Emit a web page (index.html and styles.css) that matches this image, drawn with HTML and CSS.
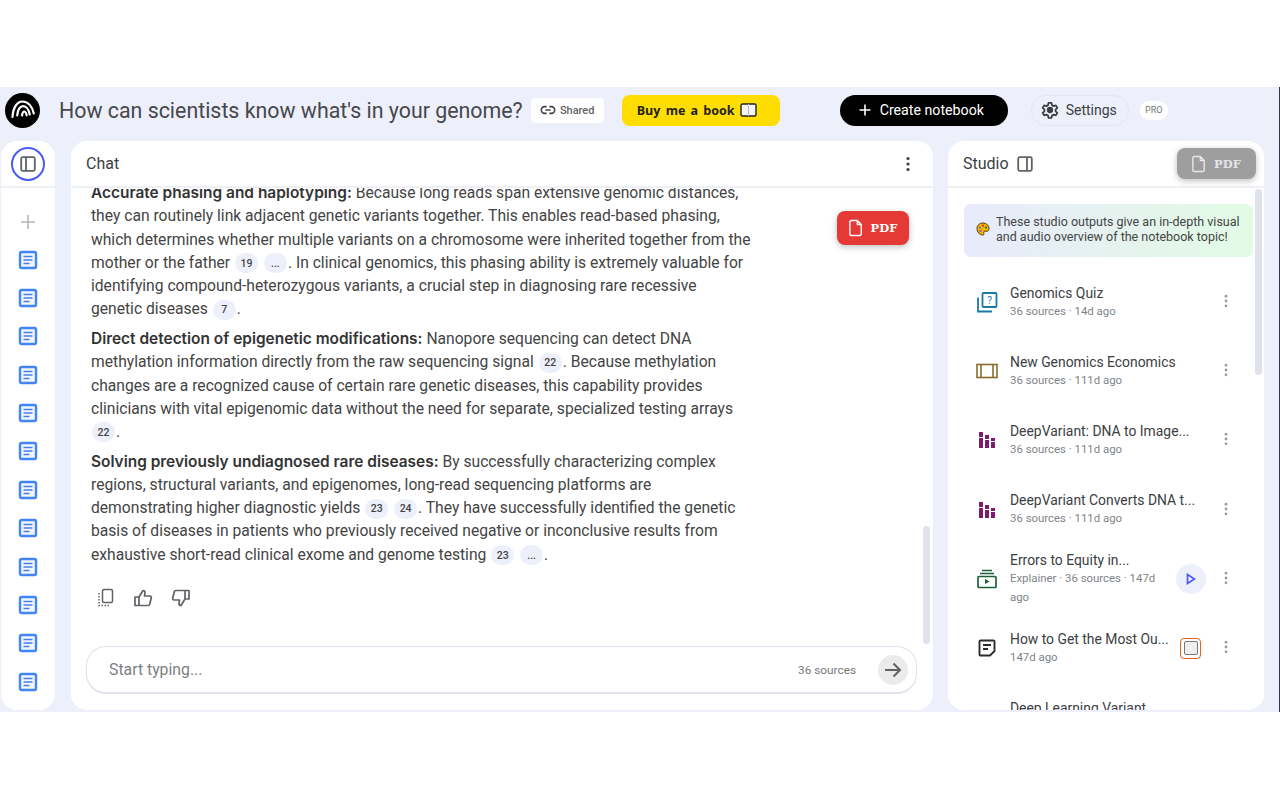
FILE: index.html
```html
<!DOCTYPE html>
<html>
<head>
<meta charset="utf-8">
<title>How can scientists know what's in your genome?</title>
	<link rel="stylesheet" href="styles.css">
</head>
<body>
	<svg class="sprites" width="0" height="0">
		<symbol id="doc" viewBox="0 0 20 20">
			<rect x="2" y="2" width="16" height="16" rx="1.5" fill="#f1f5fe" stroke="#4285f4" stroke-width="2.4"/>
			<path d="M5.5 6.5h9M5.5 10h9M5.5 13.5h6" stroke="#4a7fe8" stroke-width="1.7" fill="none"/>
		</symbol>
		<symbol id="dots" viewBox="0 0 4 16">
			<circle cx="2" cy="2.5" r="1.6"/><circle cx="2" cy="8" r="1.6"/><circle cx="2" cy="13.5" r="1.6"/>
		</symbol>
		<symbol id="bars" viewBox="0 0 18 18">
			<path d="M1 1h4v5H1zM1 7h4v10H1zM7 4h4v4H7zM7 9h4v8H7zM13 7h4v3h-4zM13 11h4v6h-4z" fill="#7b1c6d"/>
		</symbol>
		<symbol id="file" viewBox="0 0 16 20">
			<path d="M2.500 1.500h7l4.500 4.500v11a1.500 1.500 0 0 1-1.500 1.500h-10A1.500 1.500 0 0 1 1 17V3a1.500 1.500 0 0 1 1.500-1.500zM9.500 1.500V6H14" fill="none" stroke="currentColor" stroke-width="1.600" stroke-linejoin="round"/>
		</symbol>
	</svg>

	<div class="app">
		<header class="topbar">
			<div class="logo">
				<svg width="26" height="26" viewBox="0 0 26 26" fill="none" stroke="#fff" stroke-width="2.200" stroke-linecap="round">
					<path d="M2.500 20C3 10 7.500 4.500 12.500 4.500 18 4.500 22.500 9.500 23.800 16.500"/>
					<path d="M7.200 18.500C8 12 10.500 9.200 13.200 9.200 16 9.200 18.800 12.500 19.800 17.500"/>
					<path d="M12 18.500c.4-2.500 1-4 2.200-4 1.200 0 2 1.500 2.500 3.800"/>
				</svg>
			</div>
			<h1 class="title">How can scientists know what's in your genome?</h1>
			<div class="shared">
				<svg width="16" height="16" viewBox="0 0 24 24" fill="none" stroke="#444" stroke-width="2.400"><path d="M10 7H7a5 5 0 0 0 0 10h3M14 7h3a5 5 0 0 1 0 10h-3M8 12h8"/></svg>
				Shared
			</div>
			<div class="book">
				Buy me a book
				<svg width="17" height="14" viewBox="0 0 17 14"><rect x="1" y="1" width="15" height="12" rx="1.500" fill="#f4f4f4" stroke="#222" stroke-width="1.400"/><path d="M8.500 1v12" stroke="#bbb"/></svg>
			</div>
			<div class="create">
				<svg width="14" height="14" viewBox="0 0 14 14" stroke="#fff" stroke-width="1.600"><path d="M7 1.500v11M1.500 7h11"/></svg>
				Create notebook
			</div>
			<div class="settings">
				<svg width="18" height="18" viewBox="0 0 24 24" fill="none" stroke="#3c4043" stroke-width="2.400" stroke-linejoin="round"><path d="M10 2.500h4l.6 3 2.300 1.300 2.900-1 2 3.400-2.300 2v2.600l2.300 2-2 3.400-2.900-1-2.300 1.300-.6 3h-4l-.6-3-2.300-1.300-2.900 1-2-3.400 2.300-2v-2.600l-2.300-2 2-3.400 2.900 1 2.300-1.300z"/><circle cx="12" cy="12" r="3" fill="#3c4043"/></svg>
				Settings
			</div>
			<div class="pro">PRO</div>
		</header>

		<div class="panels">
			<aside class="rail">
				<div class="rail-head">
					<div class="rail-toggle">
						<svg width="16" height="16" viewBox="0 0 16 16" fill="none" stroke="#5f6368" stroke-width="1.800"><rect x="1.200" y="1.200" width="13.600" height="13.600" rx="1.500"/><path d="M6 1.500v13"/></svg>
					</div>
				</div>
				<div class="rail-list">
					<svg class="rail-plus" width="14" height="14" viewBox="0 0 14 14" stroke="#b4b6ba" stroke-width="1.600"><path d="M7 0v14M0 7h14"/></svg>
					<svg class="rail-doc"><use href="#doc"/></svg>
					<svg class="rail-doc"><use href="#doc"/></svg>
					<svg class="rail-doc"><use href="#doc"/></svg>
					<svg class="rail-doc"><use href="#doc"/></svg>
					<svg class="rail-doc"><use href="#doc"/></svg>
					<svg class="rail-doc"><use href="#doc"/></svg>
					<svg class="rail-doc"><use href="#doc"/></svg>
					<svg class="rail-doc"><use href="#doc"/></svg>
					<svg class="rail-doc"><use href="#doc"/></svg>
					<svg class="rail-doc"><use href="#doc"/></svg>
					<svg class="rail-doc"><use href="#doc"/></svg>
					<svg class="rail-doc"><use href="#doc"/></svg>
				</div>
			</aside>

			<main class="chat">
				<div class="panel-head">
					<span class="panel-title">Chat</span>
					<svg class="chat-menu"><use href="#dots"/></svg>
				</div>
				<div class="messages">
					<p><b>Accurate phasing and haplotyping:</b> Because long reads span extensive genomic distances,<br>
					they can routinely link adjacent genetic variants together. This enables read-based phasing,<br>
					which determines whether multiple variants on a chromosome were inherited together from the<br>
					mother or the father <span class="cite">19</span> <span class="cite">...</span>. In clinical genomics, this phasing ability is extremely valuable for<br>
					identifying compound-heterozygous variants, a crucial step in diagnosing rare recessive<br>
					genetic diseases <span class="cite">7</span>.</p>
					<p><b>Direct detection of epigenetic modifications:</b> Nanopore sequencing can detect DNA<br>
					methylation information directly from the raw sequencing signal <span class="cite">22</span>. Because methylation<br>
					changes are a recognized cause of certain rare genetic diseases, this capability provides<br>
					clinicians with vital epigenomic data without the need for separate, specialized testing arrays<br>
					<span class="cite">22</span>.</p>
					<p><b>Solving previously undiagnosed rare diseases:</b> By successfully characterizing complex<br>
					regions, structural variants, and epigenomes, long-read sequencing platforms are<br>
					demonstrating higher diagnostic yields <span class="cite">23</span> <span class="cite">24</span>. They have successfully identified the genetic<br>
					basis of diseases in patients who previously received negative or inconclusive results from<br>
					exhaustive short-read clinical exome and genome testing <span class="cite">23</span> <span class="cite">...</span>.</p>
					<div class="feedback">
						<svg width="18" height="20" viewBox="0 0 18 20" fill="none" stroke="#5f6368" stroke-width="1.500"><rect x="5.500" y="1.500" width="10" height="13" rx="1.500"/><path d="M2 5v12.500h10" stroke-dasharray="1.500 1.500"/></svg>
						<svg width="20" height="20" viewBox="0 0 20 20" fill="none" stroke="#5f6368" stroke-width="1.700" stroke-linejoin="round"><path d="M6 9 10 2.500c1.500 0 2 1 2 2L11.500 8H17c1 0 1.500 1 1.300 1.800l-1.600 6.500c-.2.700-.8 1.200-1.500 1.200H6zM6 9H2v8.500h4"/></svg>
						<svg width="20" height="20" viewBox="0 0 20 20" fill="none" stroke="#5f6368" stroke-width="1.700" stroke-linejoin="round"><path d="M14 11l-4 6.500c-1.500 0-2-1-2-2l.5-3.500H3c-1 0-1.500-1-1.300-1.800l1.600-6.500c.2-.7.8-1.200 1.500-1.200H14zM14 11h4V2.500h-4"/></svg>
					</div>
				</div>
				<div class="chat-scroll"></div>
				<div class="pdf pdf-red">
					<svg width="14" height="18"><use href="#file"/></svg>
					PDF
				</div>
				<div class="input-row">
					<span class="placeholder">Start typing...</span>
					<span class="source-count">36 sources</span>
					<div class="send">
						<svg width="18" height="18" viewBox="0 0 18 18" fill="none" stroke="#5f6368" stroke-width="2"><path d="M1 9h15M9.500 2.500 16 9l-6.500 6.500"/></svg>
					</div>
				</div>
			</main>

			<aside class="studio">
				<div class="panel-head">
					<span class="panel-title">Studio</span>
					<svg class="studio-toggle" width="16" height="16" viewBox="0 0 16 16" fill="none" stroke="#5f6368" stroke-width="1.800"><rect x="1.200" y="1.200" width="13.600" height="13.600" rx="1.500"/><path d="M10 1.500v13"/></svg>
				</div>
				<div class="pdf pdf-grey">
					<svg width="14" height="18"><use href="#file"/></svg>
					PDF
				</div>
				<div class="studio-scroll"></div>
				<div class="studio-list">
					<div class="notice">
						<svg class="palette" width="14" height="14" viewBox="0 0 14 14">
							<path d="M7 1C3.500 1 1 3.300 1 6.500S3.500 13 6.500 13c1.500 0 1.700-1 1.300-2-.4-1 .2-1.800 1.300-1.800h1.900C12.300 9.200 13 8 13 6.500 13 3.500 10.500 1 7 1z" fill="#f5b400" stroke="#4a3a10" stroke-width="1"/>
							<circle cx="4" cy="5.500" r="1.100" fill="#3b78e7"/><circle cx="7" cy="3.700" r="1.100" fill="#d93025"/><circle cx="10" cy="5.500" r="1.100" fill="#188038"/><circle cx="4.500" cy="9" r="1.100" fill="#a142f4"/>
						</svg>
						<span>These studio outputs give an in-depth visual and audio overview of the notebook topic!</span>
					</div>

					<div class="item">
						<div class="item-icon">
							<svg width="22" height="22" viewBox="0 0 22 22" fill="none" stroke="#1a7bab" stroke-width="1.800"><rect x="6.500" y="2" width="14" height="14" rx="1"/><path d="M2 6.500V20.500h14"/><text x="13.500" y="13" font-size="10" font-family="Roboto, sans-serif" text-anchor="middle" fill="#1a7bab" stroke="none">?</text></svg>
						</div>
						<div class="item-text">
							<div class="item-name">Genomics Quiz</div>
							<div class="item-sub">36 sources · 14d ago</div>
						</div>
						<svg class="item-menu"><use href="#dots"/></svg>
					</div>

					<div class="item">
						<div class="item-icon">
							<svg width="22" height="16" viewBox="0 0 22 16" fill="none" stroke="#8a6d2b" stroke-width="1.600"><rect x="1" y="1.500" width="20" height="13"/><path d="M5 1.500v13M17 1.500v13"/></svg>
						</div>
						<div class="item-text">
							<div class="item-name">New Genomics Economics</div>
							<div class="item-sub">36 sources · 111d ago</div>
						</div>
						<svg class="item-menu"><use href="#dots"/></svg>
					</div>

					<div class="item">
						<div class="item-icon">
							<svg width="18" height="18"><use href="#bars"/></svg>
						</div>
						<div class="item-text">
							<div class="item-name">DeepVariant: DNA to Image...</div>
							<div class="item-sub">36 sources · 111d ago</div>
						</div>
						<svg class="item-menu"><use href="#dots"/></svg>
					</div>

					<div class="item">
						<div class="item-icon">
							<svg width="18" height="18"><use href="#bars"/></svg>
						</div>
						<div class="item-text">
							<div class="item-name">DeepVariant Converts DNA t...</div>
							<div class="item-sub">36 sources · 111d ago</div>
						</div>
						<svg class="item-menu"><use href="#dots"/></svg>
					</div>

					<div class="item">
						<div class="item-icon">
							<svg width="20" height="20" viewBox="0 0 20 20" fill="none" stroke="#1e5f3a" stroke-width="1.700"><path d="M5 1.500h10M3 4.500h14"/><rect x="1" y="7.500" width="18" height="11" rx="1" stroke="#1e5f3a"/><path d="M8 10v5l4.500-2.500z" fill="#1e5f3a" stroke="none"/></svg>
						</div>
						<div class="item-text">
							<div class="item-name">Errors to Equity in...</div>
							<div class="item-sub">Explainer · 36 sources · 147d ago</div>
						</div>
						<div class="item-play">
							<svg width="10" height="12" viewBox="0 0 10 12" fill="none" stroke="#4a5cf0" stroke-width="1.700"><path d="M1.500 1.500v9L8.500 6z"/></svg>
						</div>
						<svg class="item-menu"><use href="#dots"/></svg>
					</div>

					<div class="item">
						<div class="item-icon">
							<svg width="18" height="18" viewBox="0 0 18 18" fill="none" stroke="#2c2c2c" stroke-width="1.900"><path d="M2.500 1.500h13a1 1 0 0 1 1 1V12l-4.500 4.500H2.500a1 1 0 0 1-1-1v-13a1 1 0 0 1 1-1zM5 6h8M5 10h5"/></svg>
						</div>
						<div class="item-text">
							<div class="item-name">How to Get the Most Ou...</div>
							<div class="item-sub">147d ago</div>
						</div>
						<div class="item-stop"><span></span></div>
						<svg class="item-menu"><use href="#dots"/></svg>
					</div>

					<div class="item">
						<div class="item-icon">
							<svg width="18" height="18" viewBox="0 0 18 18"><path d="M1 2h16v3H1z" fill="#a54a94"/></svg>
						</div>
						<div class="item-text">
							<div class="item-name">Deep Learning Variant</div>
							<div class="item-sub">36 sources · 147d ago</div>
						</div>
						<svg class="item-menu"><use href="#dots"/></svg>
					</div>
				</div>
			</aside>
		</div>
	</div>
</body>
</html>
```

FILE: styles.css
```css
body {
	font-family: Inter, "Liberation Sans", sans-serif;
	margin: 0;
	padding: 0;
	background: white;
	color: #3c4043;
}
.sprites {
	position: absolute;
}
.app {
	margin-top: 87px;
	height: 625px;
	background: #edeffa;
	overflow: hidden;
	border-right: 1px solid #2a3550;
}
.topbar {
	height: 46px;
	padding: 0 0 8px 5px;
	display: flex;
	align-items: center;
}
.logo {
	width: 35px;
	height: 35px;
	border-radius: 50%;
	background: black;
	display: flex;
	align-items: center;
	justify-content: center;
	margin-right: 19px;
}
.title {
	font-family: Roboto, sans-serif;
	font-size: 21.360px;
	font-weight: 400;
	margin: 0 8px 0 0;
	color: #45484c;
	white-space: nowrap;
}
.shared {
	width: 73px;
	height: 25px;
	background: white;
	border-radius: 4px;
	display: flex;
	align-items: center;
	justify-content: center;
	gap: 4px;
	font-family: Roboto, sans-serif;
	font-size: 11px;
	font-weight: 500;
	color: #5f6368;
}
.book {
	margin-left: 18px;
	width: 158px;
	height: 31px;
	box-sizing: border-box;
	padding-left: 15px;
	background: #ffdd00;
	border-radius: 8px;
	display: flex;
	align-items: center;
	gap: 5px;
	font-family: "Open Sans", sans-serif;
	font-size: 12.500px;
	font-weight: 700;
	word-spacing: 2px;
	color: #222;
	white-space: nowrap;
}
.create {
	margin-left: 60px;
	width: 168px;
	height: 31px;
	box-sizing: border-box;
	padding-left: 18px;
	background: black;
	color: white;
	border-radius: 16px;
	display: flex;
	align-items: center;
	gap: 8px;
	font-family: Roboto, sans-serif;
	font-size: 14.200px;
	font-weight: 400;
}
.settings {
	margin-left: 23px;
	width: 98px;
	height: 31px;
	box-sizing: border-box;
	padding-left: 9px;
	border: 1px solid #e3e5f0;
	border-radius: 16px;
	display: flex;
	align-items: center;
	gap: 7px;
	font-family: Roboto, sans-serif;
	font-size: 14px;
	color: #3c4043;
}
.pro {
	margin-left: 11px;
	width: 28px;
	height: 19px;
	background: white;
	border-radius: 9px;
	display: flex;
	align-items: center;
	justify-content: center;
	font-size: 9px;
	font-family: Roboto, sans-serif;
	color: #777;
}
.panels {
	display: flex;
	height: 569px;
	padding-left: 1px;
}
.rail {
	width: 54px;
	background: white;
	border-radius: 16px;
	overflow: hidden;
	margin-right: 16px;
}
.rail-head {
	height: 45px;
	border-bottom: 2px solid #eef0f6;
	display: flex;
	align-items: center;
	justify-content: center;
}
.rail-toggle {
	width: 30px;
	height: 30px;
	border: 2px solid #4a5cf0;
	border-radius: 50%;
	display: flex;
	align-items: center;
	justify-content: center;
}
.rail-list {
	display: flex;
	flex-direction: column;
	align-items: center;
	padding-top: 27px;
}
.rail-plus {
	margin-bottom: 20.500px;
}
.rail-doc {
	width: 20px;
	height: 20px;
	flex: none;
	margin-bottom: 18.400px;
}
.chat {
	width: 862px;
	background: white;
	border-radius: 16px;
	overflow: hidden;
	position: relative;
	margin-right: 15px;
	display: flex;
	flex-direction: column;
}
.panel-head {
	height: 45px;
	flex: none;
	border-bottom: 2px solid #eef0f6;
	display: flex;
	align-items: center;
	padding: 0 15px;
	position: relative;
}
.panel-title {
	font-family: Roboto, sans-serif;
	font-size: 16px;
	color: #3c4043;
}
.chat-menu {
	width: 4px;
	height: 16px;
	margin-left: auto;
	margin-right: 8px;
	fill: #3c4043;
}
.messages {
	height: 458px;
	overflow: hidden;
	padding: 0 20px;
	font-family: Roboto, sans-serif;
	font-size: 15.650px;
	line-height: 23.120px;
	color: #444;
}
.messages p {
	margin: 0 0 7.200px;
	white-space: nowrap;
}
.messages p:first-child {
	margin-top: -6.700px;
}
.messages b {
	font-family: Inter, sans-serif;
	font-size: 15.450px;
	font-weight: 600;
	color: #333;
}
.cite {
	display: inline-flex;
	align-items: center;
	justify-content: center;
	min-width: 23px;
	height: 20px;
	box-sizing: border-box;
	padding: 0 5px;
	background: #edeffa;
	border-radius: 10px;
	font-size: 10.500px;
	font-weight: 500;
	vertical-align: 1px;
	margin: 0 1px;
}
.feedback {
	display: flex;
	gap: 18px;
	align-items: center;
	padding: 15.500px 6px 0;
}
.chat-scroll {
	position: absolute;
	right: 3px;
	top: 385px;
	width: 7px;
	height: 118px;
	background: #dfe2ec;
	border-radius: 4px;
}
.pdf {
	position: absolute;
	display: flex;
	align-items: center;
	justify-content: center;
	gap: 8px;
	color: white;
	font-family: "DejaVu Serif", "Liberation Serif", serif;
	font-weight: 700;
	font-size: 11.500px;
	border-radius: 8px;
	box-shadow: 0 2px 6px rgba(0, 0, 0, 0.25);
}
.pdf-red {
	left: 766px;
	top: 70px;
	width: 72px;
	height: 34px;
	background: #e53935;
}
.pdf-grey {
	left: 229px;
	top: 7px;
	width: 79px;
	height: 31px;
	background: #9e9e9e;
	color: #e6e6e6;
}
.input-row {
	margin: 0 16px 0 15px;
	height: 48px;
	flex: none;
	box-sizing: border-box;
	border: 1px solid #dfe2ec;
	border-bottom-width: 2px;
	border-radius: 20px;
	display: flex;
	align-items: center;
	padding: 0 8px 0 22px;
}
.placeholder {
	font-family: Roboto, sans-serif;
	font-size: 15.800px;
	color: #7d8085;
}
.source-count {
	margin-left: auto;
	font-family: Roboto, sans-serif;
	font-size: 11.800px;
	color: #777;
	margin-right: 22px;
}
.send {
	width: 30px;
	height: 30px;
	border-radius: 50%;
	background: #ebebeb;
	display: flex;
	align-items: center;
	justify-content: center;
}
.studio {
	width: 316px;
	background: white;
	border-radius: 16px;
	overflow: hidden;
	position: relative;
	display: flex;
	flex-direction: column;
}
.studio-toggle {
	margin-left: 8px;
}
.studio-scroll {
	position: absolute;
	left: 307px;
	top: 48px;
	width: 7px;
	height: 186px;
	background: #dfe2ec;
	border-radius: 4px;
}
.studio-list {
	padding: 16px 11px 0 16px;
	font-family: Roboto, sans-serif;
}
.notice {
	height: 53px;
	box-sizing: border-box;
	border-radius: 7px;
	background: linear-gradient(90deg, #e8eafc, #e2fbe4);
	display: flex;
	align-items: center;
	padding: 0 6px 3px 12px;
	gap: 6px;
	font-size: 12.500px;
	line-height: 15px;
	color: #444;
	margin-bottom: 10.500px;
}
.palette {
	flex: none;
}
.item {
	height: 69.200px;
	display: flex;
	align-items: center;
}
.item-icon {
	flex: none;
	width: 22px;
	margin-left: 12px;
	display: flex;
	justify-content: center;
}
.item-text {
	flex: 1;
	min-width: 0;
	margin-left: 12px;
	padding-top: 1px;
}
.item-name {
	font-size: 13.900px;
	line-height: 17px;
	color: #3c4043;
	white-space: nowrap;
	overflow: hidden;
}
.item-sub {
	font-size: 11.400px;
	line-height: 19px;
	color: #80848a;
}
.item-menu {
	flex: none;
	width: 4px;
	height: 14px;
	fill: #9a9ca0;
	margin: 0 25px 2px 12px;
}
.item-play {
	flex: none;
	width: 30px;
	height: 30px;
	border-radius: 50%;
	background: #edeffa;
	display: flex;
	align-items: center;
	justify-content: center;
	margin: 0 6px 0 8px;
}
.item-stop {
	flex: none;
	width: 21px;
	height: 21px;
	box-sizing: border-box;
	border: 1px solid #e8621f;
	border-radius: 4px;
	display: flex;
	align-items: center;
	justify-content: center;
	margin: 0 11px 0 8px;
}
.item-stop span {
	width: 12px;
	height: 12px;
	border: 1px solid #777;
	border-radius: 2px;
	background: #eee;
}
```
